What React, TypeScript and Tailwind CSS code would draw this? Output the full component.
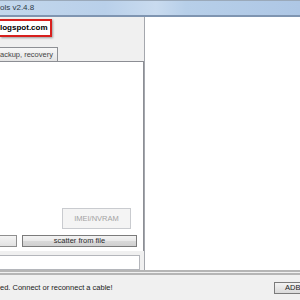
export default function App() {
  return (
    <div className="flex h-[300px] w-[300px] flex-col overflow-hidden bg-[#f0f0f0] font-['Liberation_Sans',Arial,sans-serif] text-[7.5px] text-[#1e1e1e]">
      {/* title bar */}
      <div className="flex h-[17px] shrink-0 items-center border-t border-t-[#9aa9ba] border-b-2 border-b-[#7f95b1] bg-[linear-gradient(90deg,#c3d7ec_0%,#b9d0ea_35%,#c9dbef_52%,#b7cfe9_62%,#aec7e5_100%)]">
        <span className="text-[8px] text-[#2f3a48]">ols v2.4.8</span>
      </div>

      <div className="flex flex-1">
        {/* left column */}
        <div className="flex w-[144px] shrink-0 flex-col pt-[2px]">
          <div className="flex h-[18px] w-[52px] items-center border-2 border-l-0 border-[#d8201e] bg-white shadow-[1px_1px_2px_rgba(0,0,0,0.35)]">
            <span className="font-bold text-[8px] text-black">logspot.com</span>
          </div>

          <div className="mt-[10px] flex h-[14px] w-[58px] items-center border border-l-0 border-b-0 border-[#8e9095] bg-[linear-gradient(#f7f7f7,#e4e4e4)]">
            <span className="text-[#444]">ackup, recovery</span>
          </div>

          <div className="flex h-[190px] flex-col items-end justify-end border-t border-r border-[#8c8e94] bg-white pb-[4px]">
            <div className="mr-[12px] flex h-[21px] w-[69px] items-center justify-center border border-[#c9cbcf] bg-[#f4f4f4] text-[#a3a3a3]">
              IMEI/NVRAM
            </div>
            <div className="mt-[6px] flex w-full gap-[5px] pr-[6px]">
              <div className="h-[12px] w-[17px] border border-l-0 border-[#8f8f8f] bg-[linear-gradient(#f4f4f4,#e2e2e2)]" />
              <div className="flex h-[12px] flex-1 items-center justify-center border border-[#7b7b7b] bg-[linear-gradient(#f3f3f3_0%,#e9e9e9_50%,#d9d9d9_51%,#d0d0d0_100%)] text-[#2a2a2a]">
                scatter from file
              </div>
            </div>
          </div>

          <div className="mt-[4px] h-[15px] w-[140px] border border-l-0 border-[#b4b6bb] bg-white" />
        </div>

        {/* log area */}
        <div className="flex-1 border-l border-[#a4a7ad] bg-white" />
      </div>

      {/* status bar */}
      <div className="flex h-[30px] shrink-0 items-center justify-between border-t-[5px] border-double border-[#b5b5b5] pt-[1px]">
        <span className="text-[#222]">ed. Connect or reconnect a cable!</span>
        <div className="flex h-[12px] w-[26px] items-center border border-r-0 border-[#7b7b7b] bg-[linear-gradient(#f3f3f3,#dadada)] pl-[10px] text-[#222]">
          ADB
        </div>
      </div>

      <div className="h-[3px] shrink-0 bg-[#2c8fc4]" />
    </div>
  );
}
